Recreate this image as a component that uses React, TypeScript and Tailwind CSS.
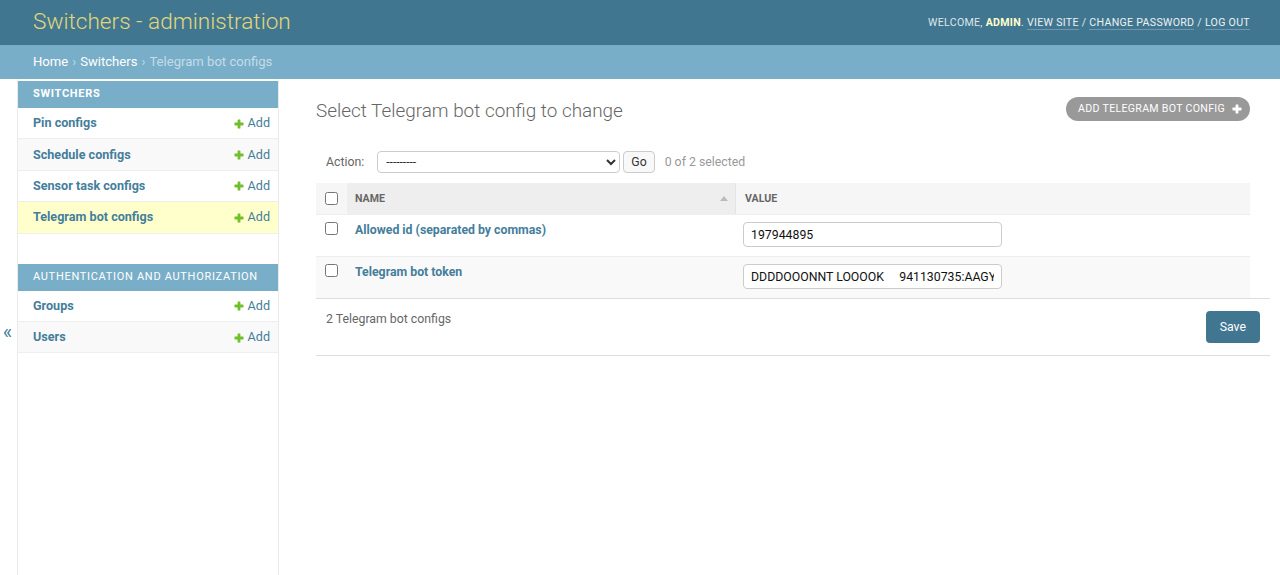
import type { ReactNode } from 'react';

const AddIcon = ({ className }: { className?: string }) => (
  <svg viewBox="0 0 10 10" className={className} fill="currentColor">
    <rect x="3.6" y="0.5" width="2.8" height="9" rx="0.6" />
    <rect x="0.5" y="3.6" width="9" height="2.8" rx="0.6" />
  </svg>
);

type ModelRow = { name: string; selected?: boolean };

const apps: { caption: string; bold?: boolean; models: ModelRow[] }[] = [
  {
    caption: 'Switchers',
    bold: true,
    models: [{ name: 'Pin configs' }, { name: 'Schedule configs' }, { name: 'Sensor task configs' }, { name: 'Telegram bot configs', selected: true }],
  },
  {
    caption: 'Authentication and Authorization',
    models: [{ name: 'Groups' }, { name: 'Users' }],
  },
];

const HeaderLink = ({ children }: { children: ReactNode }) => (
  <a className="border-b border-white/25 text-white/90">{children}</a>
);

export default function App() {
  return (
    <div className="flex min-h-screen flex-col bg-white font-['Roboto','Liberation_Sans',sans-serif] text-[12.3px] text-[#333]">
      {/* header */}
      <div className="flex h-[45px] items-center justify-between bg-[#417690] pl-[33px] pr-[30px]">
        <h1 className="text-[22.6px] leading-none font-light text-[#e2d77a]">Switchers - administration</h1>
        <div className="pt-[1px] text-[10.6px] tracking-[0.3px] text-[#dde6ea] uppercase">
          Welcome, <strong className="font-bold text-[#ffc]">admin</strong>. <HeaderLink>View site</HeaderLink> / <HeaderLink>Change password</HeaderLink> /{' '}
          <HeaderLink>Log out</HeaderLink>
        </div>
      </div>

      {/* breadcrumbs */}
      <div className="flex h-[34px] items-center bg-[#79aec8] pl-[33px] text-[13.1px] text-[#c4dce8]">
        <a className="text-white">Home</a>
        <span className="mx-[4px]">›</span>
        <a className="text-white">Switchers</a>
        <span className="mx-[4px]">›</span>
        <span>Telegram bot configs</span>
      </div>

      <div className="flex flex-1">
        {/* sidebar toggle */}
        <div className="flex w-[18px] items-center justify-center border-r border-[#eaeaea] pt-[10px] pr-[2px] text-[20px] leading-none text-[#447e9b]">«</div>

        {/* sidebar */}
        <div className="w-[261px] border-r border-[#eaeaea] pt-[2px]">
          {apps.map((app) => (
            <div key={app.caption} className="mb-[30px]">
              <div
                className={`flex h-[27px] items-center bg-[#79aec8] pl-[15px] text-[11px] tracking-[0.7px] text-white uppercase ${app.bold ? 'font-bold text-[#f7f7e0]' : ''}`}
              >
                {app.caption}
              </div>
              {app.models.map((m, i) => (
                <div
                  key={m.name}
                  className={`flex h-[31.4px] items-center justify-between border-b border-[#eee] pt-[1px] pr-[8px] pl-[15px] ${
                    m.selected ? 'bg-[#ffc]' : i % 2 ? 'bg-[#f9f9f9]' : 'bg-white'
                  }`}
                >
                  <a className="text-[12.6px] font-bold text-[#447e9b]">{m.name}</a>
                  <a className="flex items-center gap-[4px] text-[12.6px] text-[#447e9b]">
                    <AddIcon className="h-[10px] w-[10px] text-[#70bf2b]" />
                    Add
                  </a>
                </div>
              ))}
            </div>
          ))}
        </div>

        {/* content */}
        <div className="flex-1 pt-[18px] pr-[10px] pl-[37px]">
          <div className="flex items-center justify-between pr-[20px]">
            <h1 className="text-[18.9px] font-light text-[#666]">Select Telegram bot config to change</h1>
            <a className="-mt-[4px] flex h-[24px] items-center gap-[7px] rounded-full bg-[#999] pr-[8px] pl-[12px] text-[10.6px] tracking-[0.3px] text-white uppercase">
              Add Telegram bot config
              <AddIcon className="h-[10px] w-[10px] text-white" />
            </a>
          </div>

          {/* actions */}
          <div className="mt-[25px] flex h-[23px] items-center pl-[10px] text-[#666]">
            <span>Action:</span>
            <select className="ml-[13px] h-[22px] w-[243px] rounded-[4px] border border-[#ccc] bg-white px-[4px] text-[12px] text-[#333]">
              <option>---------</option>
            </select>
            <button className="ml-[3px] h-[22px] rounded-[4px] border border-[#ccc] bg-[#f8f8f8] px-[7px] pt-[1px] text-[12.3px] text-[#333]">Go</button>
            <span className="ml-[10px] text-[#999]">0 of 2 selected</span>
          </div>

          {/* results */}
          <div className="mt-[10px] mr-[20px]">
            <div className="flex h-[31px] items-center text-[10.6px] font-bold text-[#666] uppercase">
              <div className="flex h-full w-[31px] items-center justify-center bg-[#f6f6f6]">
                <input type="checkbox" className="h-[13px] w-[13px]" />
              </div>
              <div className="flex h-full w-[388px] items-center justify-between bg-[#eee] pr-[7px] pl-[8px]">
                <span>Name</span>
                <svg viewBox="0 0 8 5" className="h-[5px] w-[8px] text-[#bbb]" fill="currentColor">
                  <polygon points="4,0 8,5 0,5" />
                </svg>
              </div>
              <div className="flex h-full flex-1 items-center border-l border-[#e4e4e4] bg-[#f6f6f6] pl-[9px]">Value</div>
            </div>

            {[
              { name: 'Allowed id (separated by commas)', value: '197944895' },
              { name: 'Telegram bot token', value: 'DDDDOOONNT LOOOOK     941130735:AAGYAqXfZr1cJm_P9kV3' },
            ].map((r, i) => (
              <div key={r.name} className={`flex h-[42px] border-t border-[#eee] ${i % 2 ? 'bg-[#f9f9f9]' : 'bg-white'}`}>
                <div className="flex w-[31px] justify-center pt-[7px]">
                  <input type="checkbox" className="h-[13px] w-[13px]" />
                </div>
                <div className="w-[388px] pt-[6px] pl-[8px]">
                  <a className="font-bold text-[#447e9b]">{r.name}</a>
                </div>
                <div className="flex-1 pt-[7px] pl-[8px]">
                  <input
                    readOnly
                    value={r.value}
                    className="h-[25px] w-[259px] rounded-[4px] border border-[#ccc] bg-white px-[7px] text-[12.3px] text-[#111] outline-none"
                  />
                </div>
              </div>
            ))}
          </div>

          {/* paginator */}
          <div className="flex h-[58px] items-center justify-between border-y border-[#ddd] pr-[10px] pl-[10px] text-[#666]">
            <span className="-mt-[16px]">2 Telegram bot configs</span>
            <button className="h-[32px] rounded-[4px] bg-[#417690] px-[14px] text-[12.3px] text-white">Save</button>
          </div>
        </div>
      </div>
    </div>
  );
}
